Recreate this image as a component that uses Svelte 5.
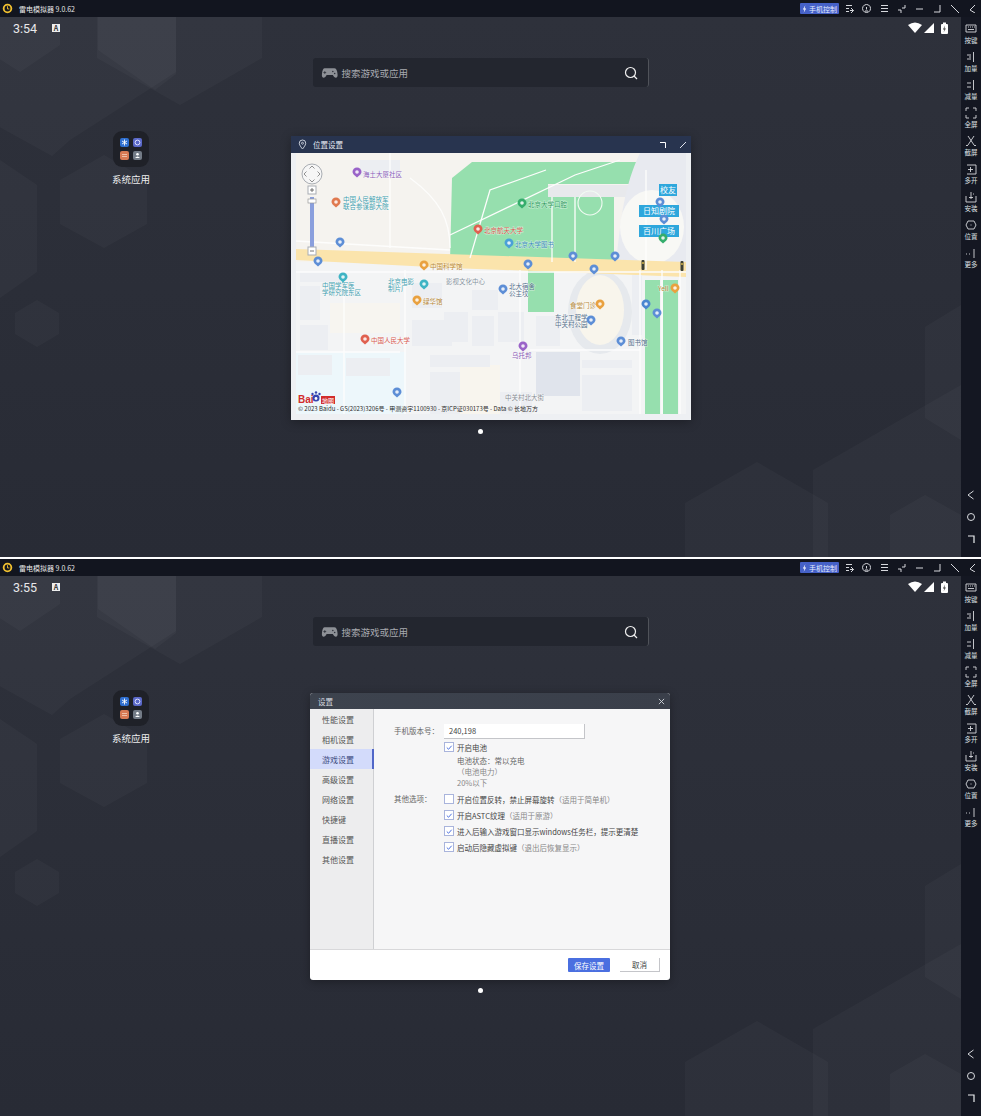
<script>
  const sideTools = [
    { label: '按键', d: 'M1 2h10v7H1zM3 4h1M5 4h1M7 4h1M9 4h1M3 6.500h6' },
    { label: '加量', d: 'M2 4h4M2 8h4M8.500 1v10M4 6h2' },
    { label: '减量', d: 'M2 4h4M2 8h4M8.500 1v10' },
    { label: '全屏', d: 'M1 4V1h3M8 1h3v3M11 8v3H8M4 11H1V8' },
    { label: '截屏', d: 'M3 1l6 9M9 1L3 10M1 10.500h2M9 10.500h2' },
    { label: '多开', d: 'M2 2h9v9H2M3 6.500h5M5.500 4v5' },
    { label: '安装', d: 'M1 5v6h10V5M6 1v7M4 6.500h4M8 3h1' },
    { label: '位置', d: 'M3 2h6l2 4-2 4H3L1 6zM6 5.500v1' },
    { label: '更多', d: 'M1 7h1M4 7h1M9 2v9' }
  ]
  const topIcons = [
    'M1 1.500h6M1 4.500h3M1 7.500h3M6 4l2.500 2.500L6 9M5 6.500h3.500',
    'M4.500 .500a4 4 0 1 0 .1 0zM4.500 3v2.500M3 7h3',
    'M1 1.500h7M1 4.500h7M1 7.500h7',
    'M8 1v3H5M1 6h3v3',
    'M1 5h7',
    'M8 1v7H2',
    'M1 1l8 8',
    'M8 1L3 6l5 3'
  ]
  const hexes = [
    [60, 17, 60, 45, 20, 72, -22, 45, -22, 17],
    [97, 17, 262, 17, 262, 58, 180, 105, 97, 58],
    [176, 17, 176, 72, 70, 140, 52, 156, -40, 105, -40, 17],
    [98, 50, 98, 17, 176, 17, 176, 74, 155, 90],
    [0, 160, 37, 185, 37, 272, 0, 298],
    [104, 155, 147, 180, 147, 224, 104, 248, 60, 224, 60, 180],
    [37, 300, 59, 313, 59, 334, 37, 347, 15, 334, 15, 313],
    [757, 462, 828, 503, 828, 557, 685, 557, 685, 503],
    [961, 385, 813, 470, 813, 557, 961, 557],
    [925, 495, 961, 515, 961, 557, 890, 557, 890, 515],
    [961, 305, 925, 327, 925, 418, 961, 440]
  ]
  const pins = [
    { x: 357, y: 173, c: '#9a63c8' },
    { x: 336, y: 203, c: '#e0794f' },
    { x: 340, y: 243, c: '#5d8ed6' },
    { x: 318, y: 262, c: '#5d8ed6' },
    { x: 343, y: 278, c: '#3fb4c4' },
    { x: 424, y: 266, c: '#e9a13f' },
    { x: 478, y: 230, c: '#e0604f' },
    { x: 522, y: 204, c: '#35ad6c' },
    { x: 509, y: 244, c: '#4aa0d8' },
    { x: 573, y: 257, c: '#5d8ed6' },
    { x: 615, y: 257, c: '#5d8ed6' },
    { x: 528, y: 265, c: '#5d8ed6' },
    { x: 594, y: 270, c: '#5d8ed6' },
    { x: 660, y: 203, c: '#5d8ed6' },
    { x: 664, y: 220, c: '#5d8ed6' },
    { x: 663, y: 239, c: '#35ad6c' },
    { x: 424, y: 285, c: '#3fb4c4' },
    { x: 417, y: 301, c: '#e9a13f' },
    { x: 365, y: 340, c: '#e0604f' },
    { x: 397, y: 393, c: '#5d8ed6' },
    { x: 503, y: 290, c: '#5d8ed6' },
    { x: 600, y: 305, c: '#e9a13f' },
    { x: 591, y: 321, c: '#5d8ed6' },
    { x: 621, y: 342, c: '#5d8ed6' },
    { x: 523, y: 347, c: '#9a63c8' },
    { x: 646, y: 305, c: '#4a86d0' },
    { x: 657, y: 314, c: '#5d8ed6' },
    { x: 675, y: 289, c: '#e9a13f' }
  ]
  const labels = [
    { x: 363, y: 177, t: ['海土大厦社区'], c: '#8a5cb8' },
    { x: 343, y: 202, t: ['中国人民解放军', '联合参谋部大院'], c: '#3f9fb0' },
    { x: 322, y: 288, t: ['中国学军医', '学研究院东区'], c: '#3f9fb0' },
    { x: 430, y: 269, t: ['中国科学馆'], c: '#b98a3a' },
    { x: 484, y: 233, t: ['北京航天大学'], c: '#d85a50' },
    { x: 528, y: 207, t: ['北京大学口腔'], c: '#2f9a60' },
    { x: 515, y: 247, t: ['北京大学图书'], c: '#3d8bc0' },
    { x: 388, y: 284, t: ['北京电影', '制片厂'], c: '#3f9fb0' },
    { x: 423, y: 304, t: ['绿华馆'], c: '#b98a3a' },
    { x: 371, y: 343, t: ['中国人民大学'], c: '#d85a50' },
    { x: 446, y: 284, t: ['影视文化中心'], c: '#8894a0' },
    { x: 509, y: 289, t: ['北大宿舍', '公主坟'], c: '#55708c' },
    { x: 570, y: 308, t: ['食堂门诊'], c: '#b98a3a' },
    { x: 555, y: 320, t: ['东北工程学', '中关村公园'], c: '#55708c' },
    { x: 628, y: 345, t: ['图书馆'], c: '#55708c' },
    { x: 512, y: 358, t: ['乌托邦'], c: '#8a5cb8' },
    { x: 505, y: 400, t: ['中关村北大街'], c: '#8a8f96' },
    { x: 658, y: 291, t: ['Yell'], c: '#b98a3a' }
  ]
  const buildings = [
    [300, 272, 40, 10], [300, 286, 20, 34], [300, 325, 28, 25], [298, 355, 34, 20],
    [346, 358, 44, 18], [412, 283, 30, 25], [412, 320, 40, 26], [430, 355, 60, 12], [430, 372, 30, 42],
    [444, 312, 24, 30], [472, 290, 26, 20], [472, 316, 22, 30], [498, 312, 26, 30],
    [582, 360, 50, 8], [582, 375, 50, 36], [536, 316, 24, 30], [360, 160, 40, 16],
    [632, 275, 10, 60], [500, 392, 32, 22]
  ]
  const roads = [
    'M296 241L450 250', 'M390 153V248', 'M296 272H686', 'M344 270V414', 'M405 270V414', 'M296 352H400',
    'M450 235L575 175L620 160', 'M470 258L490 190L546 170', 'M552 197V262', 'M575 197V262', 'M410 178C440 200 450 220 450 248',
    'M520 270V414', 'M530 350H640', 'M640 270V414', 'M662 270V414', 'M680 270V414', 'M646 170V270'
  ]
  const navItems = ['性能设置', '相机设置', '游戏设置', '高级设置', '网络设置', '快捷键', '直播设置', '其他设置']
  const otherOptions = [
    { text: '开启位置反转，禁止屏幕旋转', note: '（适用于简单机）', on: false },
    { text: '开启ASTC纹理', note: '（适用于原游）', on: true },
    { text: '进入后输入游戏窗口显示windows任务栏，提示更清楚', note: '', on: true },
    { text: '启动后隐藏虚拟键', note: '（退出后恢复显示）', on: true }
  ]
</script>

{#snippet check(on)}
  <span class="box">
    {#if on}
      <svg viewBox="0 0 9 9" width="9" height="9"><path d="M2 4.500l2 2 3.500-4" fill="none" stroke="#4a6fe0" stroke-width="1.100" /></svg>
    {/if}
  </span>
{/snippet}

{#snippet mapWindow()}
  <div class="window map-window">
    <div class="map-head">
      <svg viewBox="0 0 10 12" width="9" height="11">
        <path d="M5 1a3.600 3.600 0 0 0-3.600 3.600C1.400 7 5 11 5 11s3.600-4 3.600-6.400A3.600 3.600 0 0 0 5 1z" fill="none" stroke="#e8ecf4" stroke-width="0.900" />
        <circle cx="5" cy="4.600" r="1.100" fill="none" stroke="#e8ecf4" stroke-width="0.800" />
      </svg>
      <span class="map-title">位置设置</span>
      <span class="spacer"></span>
      <svg viewBox="0 0 8 8" width="8" height="8"><path d="M1 1.500h5.500V7" fill="none" stroke="#fff" /></svg>
      <svg viewBox="0 0 8 8" width="8" height="8"><path d="M1 7l6-6" fill="none" stroke="#dfe4ee" /></svg>
    </div>
    <div class="map-frame">
      <svg class="map" viewBox="296 153 390 261" width="390" height="261">
        <rect x="296" y="153" width="390" height="261" fill="#f5f3ef" />
        <rect x="296" y="262" width="390" height="152" fill="#f3f4f5" />
        <rect x="296" y="352" width="110" height="62" fill="#edf7fb" />
        <rect x="330" y="303" width="70" height="30" fill="#f7f5f0" />
        <rect x="460" y="365" width="40" height="49" fill="#f8f5ee" />
        <path d="M452 178L472 162H640V184H548V197H614V262H450z" fill="#96dfae" />
        <rect x="548" y="185" width="92" height="12" fill="#e8e9ec" />
        <rect x="528" y="270" width="26" height="42" fill="#96dfae" />
        <rect x="645" y="280" width="15" height="134" fill="#96dfae" />
        <rect x="663" y="280" width="15" height="134" fill="#96dfae" />
        <path d="M640 153H686V272H615C620 230 622 190 640 153z" fill="#e8eaf0" />
        <ellipse cx="652" cy="227" rx="32" ry="37" fill="#f8f8f5" />
        <ellipse cx="600" cy="312" rx="32" ry="42" fill="#e6e9ed" />
        <ellipse cx="600" cy="310" rx="24" ry="35" fill="#f8f5ec" />
        <path d="M296 249L686 262V277L560 272L450 268L296 260z" fill="#fbe4ac" />
        {#each buildings as b}
          <rect x={b[0]} y={b[1]} width={b[2]} height={b[3]} fill="#eceef2" />
        {/each}
        <rect x="536" y="352" width="44" height="44" fill="#e0e4ec" />
        {#each roads as d}
          <path {d} fill="none" stroke="#fdfdfc" stroke-width="1.300" />
        {/each}
        <circle cx="590" cy="203" r="12" fill="none" stroke="#f1fbf3" stroke-width="1.100" />
        <rect x="659" y="184" width="18" height="12" fill="#2ea7dc" />
        <rect x="639" y="205" width="40" height="12" fill="#2ea7dc" />
        <rect x="639" y="225" width="40" height="12" fill="#2ea7dc" />
        {#each [[643, 265], [682, 266]] as t}
          <rect x={t[0] - 1.500} y={t[1] - 5} width="3" height="10" rx="1" fill="#3c3f35" />
          <circle cx={t[0]} cy={t[1] - 2} r="0.900" fill="#e6c24a" />
        {/each}
        {#each labels as l}
          <text x={l.x} y={l.y} fill={l.c} class="poi">
            {#each l.t as line, i}
              <tspan x={l.x} dy={i ? 7 : 0}>{line}</tspan>
            {/each}
          </text>
        {/each}
        {#each pins as p}
          <path d="M{p.x - 4.500} {p.y - 1}a4.500 4.500 0 1 1 9 0q0 2-4.500 5.500q-4.500-3.500-4.500-5.500z" fill={p.c} />
          <circle cx={p.x} cy={p.y - 1} r="1.800" fill="#fff" opacity="0.850" />
        {/each}
        <text class="tag" x="668" y="193">校友</text>
        <text class="tag" x="659" y="214">日知剧院</text>
        <text class="tag" x="659" y="234">百川广场</text>
        <circle cx="312" cy="174" r="10" fill="#f6f6f6" stroke="#a9adb3" />
        <path d="M312 166l-2.500 2.500M312 166l2.500 2.500M312 182l-2.500-2.500M312 182l2.500-2.500M304 174l2.500-2.500M304 174l2.500 2.500M320 174l-2.500-2.500M320 174l-2.500 2.500" stroke="#777" fill="none" stroke-width="0.800" />
        <rect x="308" y="186" width="8" height="8" fill="#fff" stroke="#a9adb3" />
        <path d="M310 190h4M312 188v4" stroke="#555" stroke-width="0.800" />
        <rect x="310" y="197" width="4" height="50" fill="#8a9fdd" />
        <rect x="308" y="199" width="8" height="4" fill="#fff" stroke="#999" stroke-width="0.700" />
        <rect x="308" y="247" width="8" height="8" fill="#fff" stroke="#a9adb3" />
        <path d="M310 251h4" stroke="#555" stroke-width="0.800" />
        <text class="bai" x="298" y="403">Bai</text>
        <circle cx="316" cy="398" r="3.500" fill="#3546b0" />
        <circle cx="316" cy="398.500" r="1.400" fill="#fff" />
        <circle cx="312.500" cy="394" r="1.200" fill="#3546b0" />
        <circle cx="316" cy="392.500" r="1.200" fill="#3546b0" />
        <circle cx="319.500" cy="394" r="1.200" fill="#3546b0" />
        <rect x="321" y="396" width="14" height="8" fill="#d22c2c" />
        <text class="bai-cn" x="322" y="402.500">地图</text>
        <text class="copy" x="298" y="411">© 2023 Baidu - GS(2023)3206号 - 甲测资字1100930 - 京ICP证030173号 - Data © 长地万方</text>
      </svg>
    </div>
  </div>
{/snippet}

{#snippet settingsWindow()}
  <div class="window settings-window">
    <div class="set-head">
      <span>设置</span>
      <svg viewBox="0 0 8 8" width="7" height="7"><path d="M1 1l6 6M7 1L1 7" stroke="#d5d8de" fill="none" /></svg>
    </div>
    <div class="set-body">
      <nav class="set-nav">
        {#each navItems as item, i}
          <div class="nav-item" class:active={i === 2}>{item}</div>
        {/each}
      </nav>
      <div class="set-main">
        <div class="form-row">
          <span class="form-label">手机版本号：</span>
          <span class="input">240,198</span>
        </div>
        <div class="form-row">
          <span class="form-label"></span>
          <div class="opt">{@render check(true)}<span>开启电池</span></div>
        </div>
        <div class="hint">电池状态：常以充电</div>
        <div class="hint light">（电池电力）</div>
        <div class="hint light">20%以下</div>
        <div class="form-row others">
          <span class="form-label">其他选项：</span>
          <div class="opts">
            {#each otherOptions as o}
              <div class="opt">{@render check(o.on)}<span>{o.text}<i>{o.note}</i></span></div>
            {/each}
          </div>
        </div>
      </div>
    </div>
    <div class="set-foot">
      <button class="save">保存设置</button>
      <button class="cancel">取消</button>
    </div>
  </div>
{/snippet}

{#snippet screen(time, win)}
  <section class="screen">
    <header class="titlebar">
      <svg class="logo" viewBox="0 0 12 12" width="11" height="11">
        <circle cx="6" cy="6" r="4.200" fill="none" stroke="#f0c030" stroke-width="2" />
        <path d="M6 3.500v3h2" fill="none" stroke="#f0c030" stroke-width="1" />
      </svg>
      <span class="app-name">雷电模拟器 9.0.62</span>
      <span class="spacer"></span>
      <span class="phone-btn">
        <svg viewBox="0 0 6 9" width="5" height="8"><path d="M4 0L1 5h2L2 9l3-5H3z" fill="#fff" /></svg>
        手机控制
      </span>
      <div class="top-icons">
        {#each topIcons as d}
          <svg viewBox="0 0 9 9" width="9" height="9"><path {d} fill="none" stroke="#d6d8dd" stroke-width="1" /></svg>
        {/each}
      </div>
    </header>
    <div class="body">
      <main class="desktop">
        <svg class="hex-bg" viewBox="0 17 961 540" width="961" height="540">
          {#each hexes as h}
            <polygon points={h.join(' ')} fill="#fff" opacity="0.022" stroke="#fff" stroke-opacity="0.010" stroke-width="6" stroke-linejoin="round" />
          {/each}
        </svg>
        <div class="status">
          <span class="time">{time}</span>
          <span class="a-badge">A</span>
          <span class="spacer"></span>
          <svg viewBox="0 0 40 12" width="40" height="12">
            <path d="M0 3Q7-2 14 3L7 11z" fill="#fff" />
            <path d="M16 11L26 1V11z" fill="#fff" />
            <rect x="33" y="2" width="7" height="10" rx="1" fill="#fff" />
            <rect x="35" y="0.500" width="3" height="2" fill="#fff" />
            <path d="M37 3.500L35 7.500h1.500l-1 3 2.400-4h-1.500z" fill="#333" />
          </svg>
        </div>
        <div class="search">
          <svg viewBox="0 0 18 12" width="17" height="12">
            <path d="M4 1h10q3 0 3.500 6q.5 4-2 4q-1.500 0-3-3H6q-1.500 3-3 3q-2.500 0-2-4Q1.500 1 4 1z" fill="#8d9096" />
            <path d="M4 4v3M2.500 5.500h3" stroke="#2b2e37" stroke-width="0.800" />
            <circle cx="12.500" cy="4.500" r="0.800" fill="#2b2e37" />
            <circle cx="14.500" cy="6.500" r="0.800" fill="#2b2e37" />
          </svg>
          <span class="search-text">搜索游戏或应用</span>
          <span class="spacer"></span>
          <svg viewBox="0 0 14 14" width="14" height="14">
            <circle cx="6.500" cy="6.500" r="5" fill="none" stroke="#f0f0f0" stroke-width="1.200" />
            <path d="M10 10l3 3" stroke="#f0f0f0" stroke-width="1.300" />
          </svg>
        </div>
        <div class="folder">
          <div class="folder-icon">
            <svg viewBox="0 0 9 9"><rect width="9" height="9" rx="2" fill="#2f6fd0" /><path d="M4.500 1.500v6M2 3l5 3M7 3L2 6" stroke="#fff" stroke-width="0.900" /></svg>
            <svg viewBox="0 0 9 9"><rect width="9" height="9" rx="2" fill="#5a68c8" /><circle cx="4.500" cy="4.500" r="2.400" fill="none" stroke="#dfe4ff" stroke-width="1" /></svg>
            <svg viewBox="0 0 9 9"><rect width="9" height="9" rx="2" fill="#d97a54" /><path d="M2 3.500h5M2 5.500h5" stroke="#f6d0bd" stroke-width="0.800" /></svg>
            <svg viewBox="0 0 9 9"><rect width="9" height="9" rx="2" fill="#737b86" /><circle cx="4.500" cy="3.200" r="1.300" fill="#fff" /><path d="M2 7q2.500-3 5 0z" fill="#fff" /></svg>
          </div>
          <span>系统应用</span>
        </div>
        {@render win()}
        <span class="page-dot"></span>
      </main>
      <aside class="sidebar">
        <div class="tools">
          {#each sideTools as tool}
            <div class="tool">
              <svg viewBox="0 0 12 12" width="12" height="12"><path d={tool.d} fill="none" stroke="#d6d8dd" stroke-width="0.900" /></svg>
              <span>{tool.label}</span>
            </div>
          {/each}
        </div>
        <div class="android-nav">
          <svg viewBox="0 0 10 10" width="10" height="10"><path d="M7.500 1L2 5l5.500 4" fill="none" stroke="#d8dade" /></svg>
          <svg viewBox="0 0 10 10" width="10" height="10"><circle cx="5" cy="5" r="3.500" fill="none" stroke="#d8dade" /></svg>
          <svg viewBox="0 0 10 10" width="10" height="10"><path d="M2 2h6v7" fill="none" stroke="#eceef0" stroke-width="1.200" /></svg>
        </div>
      </aside>
    </div>
  </section>
{/snippet}

<div class="page">
  {@render screen('3:54', mapWindow)}
  <div class="divider"></div>
  {@render screen('3:55', settingsWindow)}
</div>

<style>
  :global(body) {
    margin: 0;
    background: #fff;
  }
  .page {
    width: 981px;
    height: 1116px;
    overflow: hidden;
    font-family: "Noto Sans CJK SC", "Liberation Sans", sans-serif;
  }
  .divider {
    height: 2px;
    background: #fff;
  }
  .screen {
    height: 557px;
    display: flex;
    flex-direction: column;
    background: #2a2d37;
    color: #fff;
  }
  .spacer {
    flex: 1;
  }
  .titlebar {
    height: 17px;
    flex: none;
    display: flex;
    align-items: center;
    padding-left: 2px;
    background: #12151f;
  }
  .app-name {
    margin-left: 6px;
    font-size: 7px;
    color: #e8e8e8;
  }
  .phone-btn {
    width: 39px;
    height: 11px;
    display: flex;
    align-items: center;
    justify-content: center;
    gap: 2px;
    border-radius: 1px;
    background: #4561c8;
    font-size: 7px;
    color: #e6ebff;
  }
  .top-icons {
    width: 137px;
    margin-left: 5px;
    padding: 0 5px 0 1px;
    box-sizing: border-box;
    display: flex;
    justify-content: space-between;
  }
  .body {
    flex: 1;
    display: flex;
    min-height: 0;
  }
  .desktop {
    position: relative;
    width: 961px;
    background: linear-gradient(180deg, #2e313b, #282b35);
  }
  .hex-bg {
    position: absolute;
    left: 0;
    top: 0;
  }
  .status {
    position: relative;
    height: 22px;
    display: flex;
    align-items: center;
    padding: 0 13px;
  }
  .time {
    font-family: Roboto, sans-serif;
    font-size: 12.500px;
    color: #e8e8ea;
  }
  .a-badge {
    width: 8px;
    height: 8px;
    margin-left: 15px;
    background: #eee;
    color: #333;
    font-size: 7px;
    line-height: 8px;
    font-weight: 700;
    text-align: center;
  }
  .search {
    position: relative;
    width: 336px;
    height: 29px;
    margin: 19px auto 0;
    box-sizing: border-box;
    padding: 0 10px 0 8px;
    display: flex;
    align-items: center;
    background: #23262f;
    border-radius: 3px;
    border-right: 1px solid #50535a;
  }
  .search-text {
    margin-left: 4px;
    font-size: 9.500px;
    color: #a8aab0;
  }
  .folder {
    position: absolute;
    left: 107px;
    top: 114px;
    width: 48px;
    display: flex;
    flex-direction: column;
    align-items: center;
    gap: 5px;
    font-size: 9.500px;
    color: #eee;
  }
  .folder-icon {
    width: 36px;
    height: 36px;
    box-sizing: border-box;
    padding: 7px;
    display: grid;
    grid-template-columns: 1fr 1fr;
    gap: 4px;
    background: #1f2128;
    border-radius: 9px;
  }
  .folder-icon svg {
    display: block;
    width: 9px;
    height: 9px;
  }
  .page-dot {
    position: absolute;
    left: 478px;
    top: 412px;
    width: 5px;
    height: 5px;
    border-radius: 50%;
    background: #fff;
  }
  .window {
    position: absolute;
    box-shadow: 0 2px 10px rgba(0, 0, 0, 0.3);
  }
  .map-window {
    left: 291px;
    top: 119px;
    width: 400px;
    height: 284px;
    background: #eef0f3;
  }
  .map-head {
    height: 17px;
    display: flex;
    align-items: center;
    gap: 6px;
    padding: 0 4px 0 7px;
    background: #28344f;
  }
  .map-head svg:last-child {
    margin-left: 6px;
  }
  .map-title {
    font-size: 7.500px;
    color: #e8ecf4;
  }
  .map-frame {
    padding: 0 5px;
  }
  .map {
    display: block;
  }
  .poi {
    font-size: 6.500px;
    paint-order: stroke;
    stroke: #fff;
    stroke-width: 1px;
    stroke-opacity: 0.5;
  }
  .tag {
    font-size: 8px;
    fill: #fff;
    text-anchor: middle;
  }
  .bai {
    font-family: "Liberation Sans", sans-serif;
    font-size: 10px;
    font-weight: 700;
    fill: #d22c2c;
  }
  .bai-cn {
    font-size: 6px;
    fill: #fff;
  }
  .copy {
    font-size: 6px;
    fill: #2c2c2c;
  }
  .settings-window {
    left: 310px;
    top: 117px;
    width: 360px;
    height: 287px;
    display: flex;
    flex-direction: column;
    border-radius: 3px;
    overflow: hidden;
    background: #fff;
  }
  .set-head {
    height: 16px;
    flex: none;
    display: flex;
    align-items: center;
    justify-content: space-between;
    padding: 0 5px 0 8px;
    background: linear-gradient(90deg, #3d434e, #3a3f4a);
    font-size: 7.500px;
    color: #d8dbe0;
  }
  .set-body {
    height: 240px;
    flex: none;
    display: flex;
    background: #f6f6f7;
    color: #444;
  }
  .set-nav {
    width: 64px;
    box-sizing: border-box;
    background: #ededee;
    border-right: 1px solid #cfd0d3;
  }
  .nav-item {
    height: 20px;
    padding-left: 12px;
    display: flex;
    align-items: center;
    font-size: 8px;
    color: #555;
  }
  .nav-item.active {
    margin-right: -1px;
    background: #d3dbfb;
    border-right: 2px solid #5167c8;
    color: #3c4a80;
  }
  .set-main {
    flex: 1;
    padding: 15px 0 0 20px;
    font-size: 7.500px;
  }
  .form-row {
    display: flex;
    align-items: flex-start;
  }
  .form-label {
    width: 50px;
    flex: none;
    line-height: 14px;
    color: #666;
  }
  .input {
    width: 135px;
    height: 14px;
    padding-left: 5px;
    line-height: 14px;
    background: #fff;
    border-right: 1px solid #c4c5c9;
    border-bottom: 1px solid #c4c5c9;
  }
  .opt {
    height: 16px;
    display: flex;
    align-items: center;
    gap: 3px;
    white-space: nowrap;
    color: #444;
  }
  .opt i {
    font-style: normal;
    color: #888;
  }
  .box {
    width: 8px;
    height: 8px;
    flex: none;
    display: flex;
    align-items: center;
    justify-content: center;
    background: #fff;
    border: 1px solid #a9b4dc;
  }
  .hint {
    height: 11px;
    margin-left: 63px;
    line-height: 11px;
    color: #666;
  }
  .hint.light {
    color: #888;
  }
  .others {
    margin-top: 3px;
  }
  .others .form-label {
    line-height: 16px;
  }
  .set-foot {
    flex: 1;
    display: flex;
    align-items: center;
    justify-content: flex-end;
    gap: 10px;
    padding: 0 10px 0 0;
    border-top: 1px solid #d8d8da;
  }
  .set-foot button {
    height: 14px;
    padding: 0;
    border: none;
    font: inherit;
    font-size: 7.500px;
  }
  .save {
    width: 42px;
    border-radius: 1px;
    background: #4a6fe0;
    color: #fff;
  }
  .cancel {
    width: 40px;
    background: #fff;
    color: #444;
    border-right: 1px solid #c4c5c9 !important;
    border-bottom: 1px solid #c4c5c9 !important;
  }
  .sidebar {
    width: 20px;
    flex: none;
    display: flex;
    flex-direction: column;
    justify-content: space-between;
    background: #141722;
  }
  .tools {
    padding-top: 6px;
  }
  .tool {
    height: 28px;
    display: flex;
    flex-direction: column;
    align-items: center;
    gap: 1px;
  }
  .tool span {
    font-size: 6.500px;
    line-height: 8px;
    color: #dfe1e5;
  }
  .android-nav {
    padding-bottom: 13px;
    display: flex;
    flex-direction: column;
    align-items: center;
    gap: 12px;
  }
</style>
